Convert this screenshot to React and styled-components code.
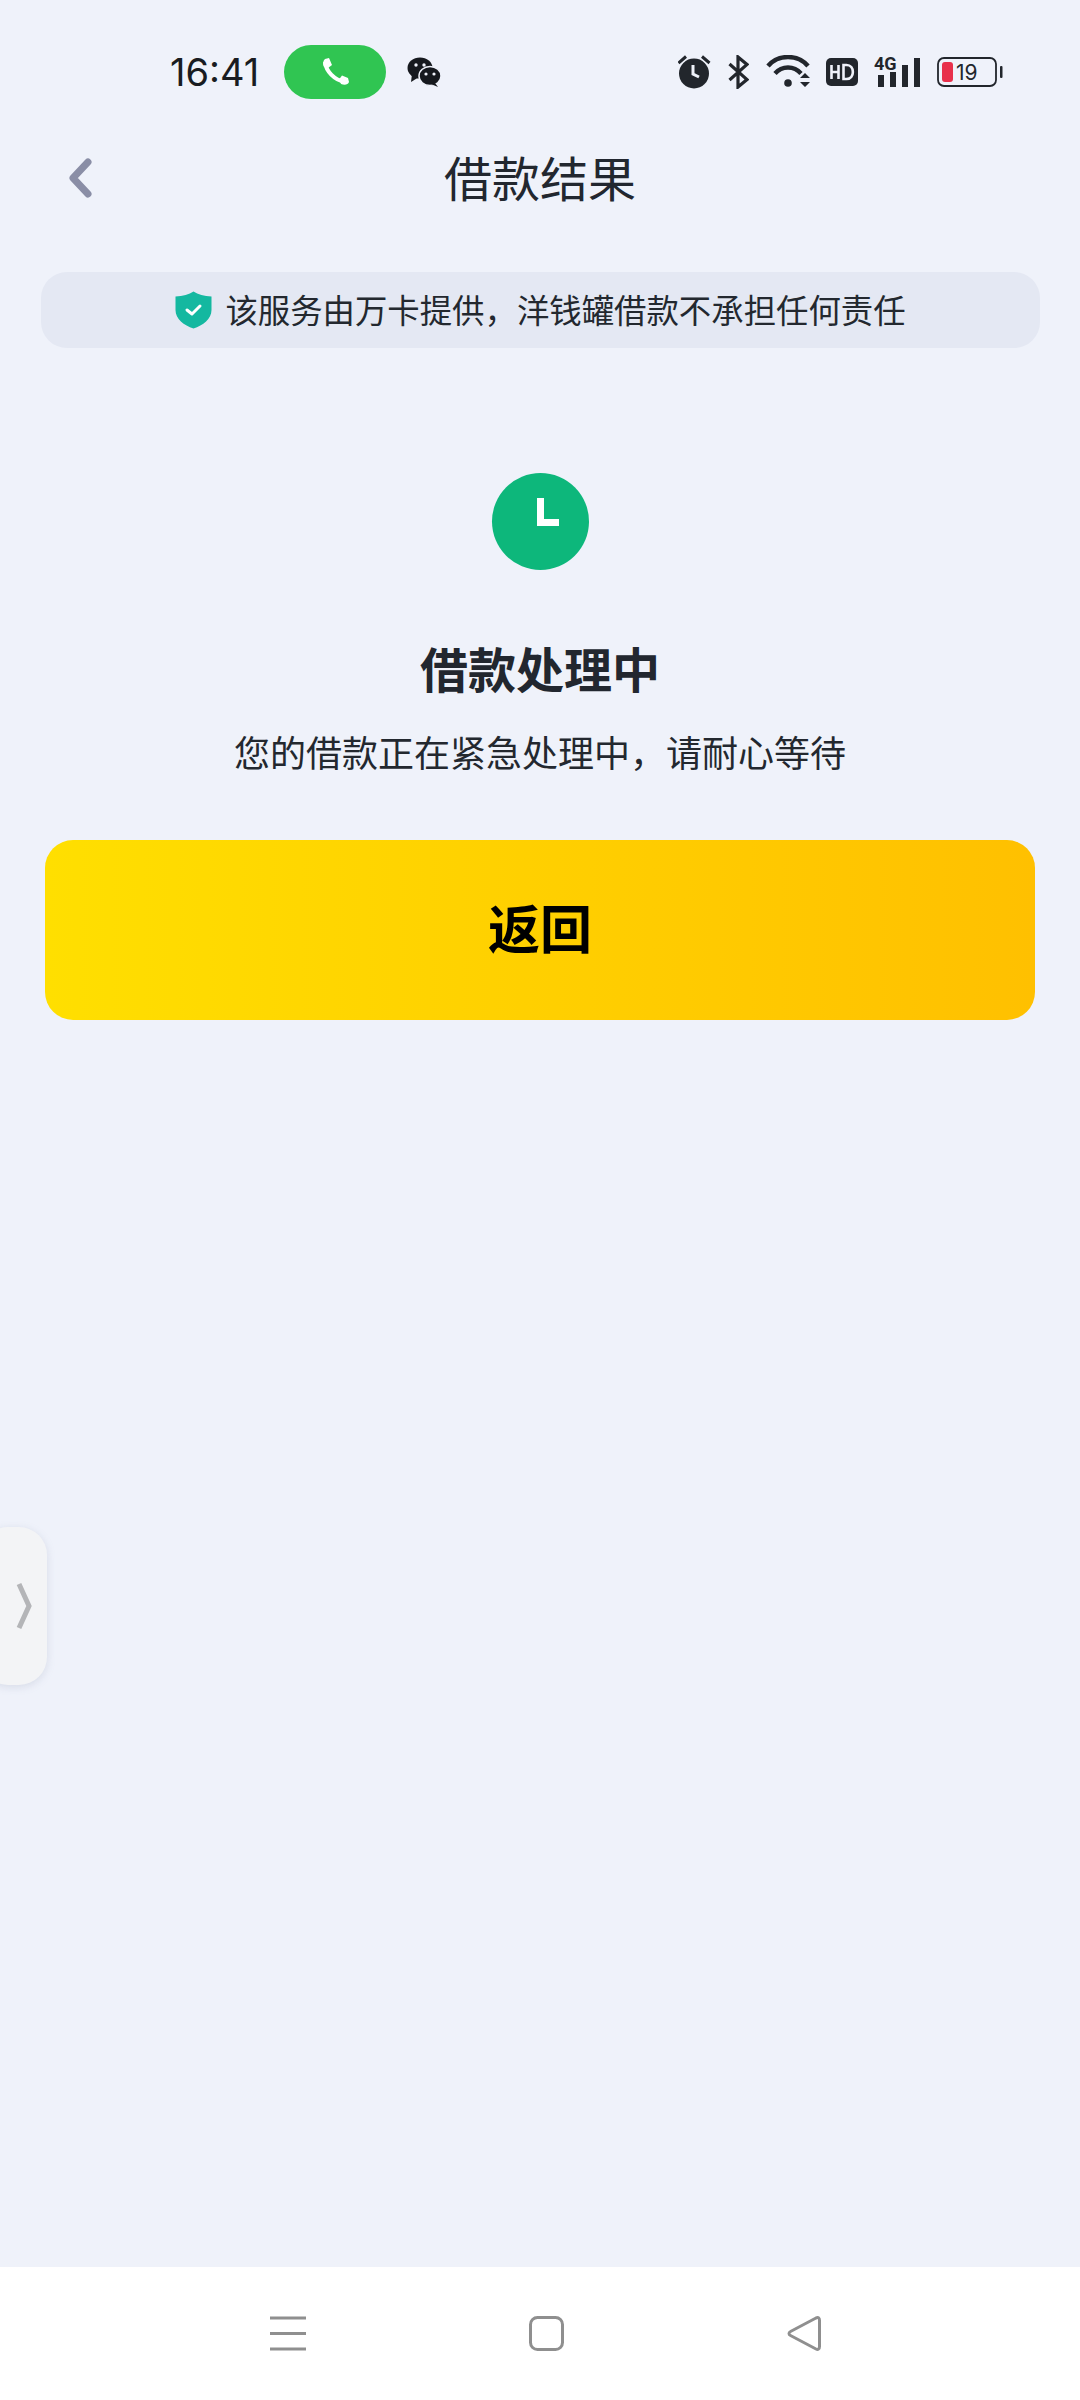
import React from "react";
import styled, { createGlobalStyle } from "styled-components";

const GlobalStyle = createGlobalStyle`
  html, body {
    margin: 0;
    padding: 0;
    background: #eff2fa;
    font-family: "Noto Sans CJK SC", "Noto Sans", sans-serif;
  }
`;

const Page = styled.div`
  position: relative;
  width: 1080px;
  height: 2400px;
  display: flex;
  flex-direction: column;
  overflow: hidden;
  background: #eff2fa;
  color: #22272f;
`;

const StatusBar = styled.div`
  height: 72px;
  padding: 36px 77px 0 170px;
  display: flex;
  align-items: center;
  justify-content: space-between;
`;

const StatusGroup = styled.div`
  display: flex;
  align-items: center;
  gap: ${p => p.$gap || 0}px;
`;

const Clock = styled.span`
  font-family: Inter, "Noto Sans", sans-serif;
  font-size: 38px;
  line-height: 44px;
  width: 93px;
  color: #191c21;
`;

const CallPill = styled.div`
  width: 102px;
  height: 54px;
  margin-left: 21px;
  margin-right: 21px;
  border-radius: 27px;
  background: #30c552;
  display: flex;
  align-items: center;
  justify-content: center;
`;

const NavBar = styled.div`
  position: relative;
  height: 72px;
  margin-top: 32px;
  display: flex;
  align-items: center;
  justify-content: center;
`;

const BackButton = styled.div`
  position: absolute;
  left: 66px;
  top: 18px;
  display: flex;
`;

const Title = styled.h1`
  margin: 0;
  font-size: 48px;
  font-weight: 400;
  line-height: 72px;
  color: #22272f;
`;

const Notice = styled.div`
  margin: 60px 40px 0 41px;
  height: 76px;
  padding-bottom: 4px;
  box-sizing: border-box;
  border-radius: 26px;
  background: #e4e8f3;
  display: flex;
  align-items: center;
  justify-content: center;
  gap: 13px;
  font-size: 32.4px;
  color: #23282f;
`;

const Shield = styled.svg`
  display: block;
  margin-top: 3px;
`;

const Result = styled.div`
  display: flex;
  flex-direction: column;
  align-items: center;
  padding-top: 125px;
`;

const StatusCircle = styled.div`
  width: 97px;
  height: 97px;
  border-radius: 50%;
  background: #0db77b;
  display: flex;
`;

const Heading = styled.h2`
  margin: 62px 0 0;
  font-size: 48px;
  font-weight: 700;
  line-height: 70px;
  color: #22272f;
`;

const Message = styled.p`
  margin: 23px 0 0;
  font-size: 36px;
  font-weight: 400;
  line-height: 52px;
  color: #23282f;
`;

const PrimaryButton = styled.button`
  display: block;
  width: 990px;
  height: 180px;
  margin: 63px 0 0 45px;
  padding: 0 0 8px;
  border: 0;
  border-radius: 28px;
  background: linear-gradient(90deg, #ffdf00, #ffc000);
  font-family: inherit;
  font-size: 52px;
  font-weight: 700;
  color: #000;
`;

const Spacer = styled.div`
  flex: 1;
`;

const SideHandle = styled.div`
  position: absolute;
  left: -20px;
  top: 1527px;
  width: 67px;
  height: 158px;
  border-radius: 28px;
  background: #f3f4f6;
  box-shadow: 0 2px 8px rgba(120, 130, 160, 0.2);
  display: flex;
  align-items: center;
  justify-content: flex-end;
  padding-right: 14px;
  box-sizing: border-box;
`;

const BottomNav = styled.div`
  height: 133px;
  background: #fff;
  box-sizing: border-box;
  display: flex;
  align-items: center;
  gap: 223px;
  padding-left: 270px;
`;

const NavIcon = styled.svg`
  display: block;
`;

const SignalSvg = styled.svg`
  display: block;
  margin-top: -6px;
`;

const PhoneIcon = () => (
  <svg width="30" height="30" viewBox="0 0 30 30">
    <path d="M5 5 C6 14 14 23 25 25" stroke="#fff" strokeWidth="4" fill="none" />
    <path d="M5 2 L9 1 L12 8 L8 11 L4 10 C2.5 7 3 3.5 5 2 Z" fill="#fff" />
    <path d="M28 21 L29 25 C28 27.5 25 28.5 21 27 L19 22.5 L22 18.5 Z" fill="#fff" />
  </svg>
);

const WeChatIcon = () => (
  <svg width="34" height="30" viewBox="0 0 34 30">
    <ellipse cx="13" cy="11" rx="12.5" ry="10.5" fill="#16191e" />
    <path d="M5 17 L4 25 L12 20 Z" fill="#16191e" />
    <ellipse cx="23" cy="19" rx="11" ry="9.5" fill="#16191e" stroke="#eff2fa" strokeWidth="1.5" />
    <path d="M28 26 L31 30 L24 27 Z" fill="#16191e" />
    <circle cx="9" cy="8" r="1.7" fill="#eff2fa" />
    <circle cx="17" cy="8" r="1.7" fill="#eff2fa" />
    <circle cx="19" cy="17" r="1.6" fill="#eff2fa" />
    <circle cx="27" cy="17" r="1.6" fill="#eff2fa" />
  </svg>
);

const AlarmIcon = () => (
  <svg width="34" height="34" viewBox="0 0 34 34">
    <circle cx="16" cy="18.5" r="15" fill="#22262c" />
    <path d="M0.5 8 L8 1.5 M31.5 8 L24 1.5" stroke="#22262c" strokeWidth="3" />
    <path d="M15 10 L15 19 L21 22" stroke="#eff2fa" strokeWidth="3" fill="none" />
  </svg>
);

const BluetoothIcon = () => (
  <svg width="21" height="34" viewBox="0 0 21 34">
    <path d="M1.5 9 L19 24.5 L10 32 L10 2 L19 9.5 L1.5 25" stroke="#22262c" strokeWidth="3.2" fill="none" />
  </svg>
);

const WifiIcon = () => (
  <svg width="45" height="34" viewBox="-3 0 45 34">
    <path d="M0 11 C10 -1 30 -1 40 11" stroke="#22262c" strokeWidth="4.4" fill="none" />
    <path d="M7 18.5 C14 10.5 26 10.5 33 18.5" stroke="#22262c" strokeWidth="4.4" fill="none" />
    <circle cx="20" cy="28" r="3.8" fill="#22262c" />
    <path d="M32 23 L37 18 L42 23 Z M32 27 L42 27 L37 32 Z" fill="#22262c" />
  </svg>
);

const HdIcon = () => (
  <svg width="32" height="28" viewBox="0 0 32 28">
    <rect width="32" height="28" rx="5" fill="#22262c" />
    <path d="M5.5 7 V21 M12.5 7 V21 M5.5 14 H12.5" stroke="#eff2fa" strokeWidth="2.6" fill="none" />
    <path d="M17.5 7 V21 H20.5 C29 21 29 7 20.5 7 Z" stroke="#eff2fa" strokeWidth="2.6" fill="none" />
  </svg>
);

const SignalIcon = () => (
  <SignalSvg width="47" height="38" viewBox="0 -6 47 38">
    <text x="0" y="14" fontFamily="Roboto, sans-serif" fontSize="18" fontWeight="700" fill="#22262c">4G</text>
    <rect x="4" y="19" width="6" height="12" fill="#22262c" />
    <rect x="16" y="16" width="6" height="15" fill="#22262c" />
    <rect x="28" y="9" width="6" height="22" fill="#22262c" />
    <rect x="40" y="2" width="6" height="29" fill="#22262c" />
  </SignalSvg>
);

const BatteryIcon = () => (
  <svg width="66" height="30" viewBox="0 0 66 30">
    <rect x="1" y="1" width="58" height="28" rx="6" fill="none" stroke="#22262c" strokeWidth="1.8" />
    <rect x="5" y="5" width="11" height="20" rx="3" fill="#e8304b" />
    <text x="19" y="23" fontFamily="Inter, sans-serif" fontSize="21" fill="#22262c">19</text>
    <rect x="63" y="9" width="2.5" height="12" rx="1" fill="#22262c" />
  </svg>
);

const ShieldIcon = () => (
  <Shield width="37" height="38" viewBox="0 0 37 38">
    <path
      d="M18.5 0.5 C23 3.5 29 5 36.5 5.5 V19 C36.5 28 28 34.5 18.5 37.5 C9 34.5 0.5 28 0.5 19 V5.5 C8 5 14 3.5 18.5 0.5 Z"
      fill="#14b8a0"
    />
    <path d="M12 19 L17 23 L25 15" stroke="#fff" strokeWidth="3" fill="none" strokeLinecap="round" strokeLinejoin="round" />
  </Shield>
);

const App = () => (
  <Page>
    <GlobalStyle />
    <StatusBar>
      <StatusGroup>
        <Clock>16:41</Clock>
        <CallPill>
          <PhoneIcon />
        </CallPill>
        <WeChatIcon />
      </StatusGroup>
      <StatusGroup $gap={16}>
        <AlarmIcon />
        <BluetoothIcon />
        <WifiIcon />
        <HdIcon />
        <SignalIcon />
        <BatteryIcon />
      </StatusGroup>
    </StatusBar>
    <NavBar>
      <BackButton>
        <svg width="30" height="40" viewBox="0 0 30 40">
          <path d="M22 4 L7 20 L22 36" stroke="#8a8ea6" strokeWidth="7" fill="none" strokeLinecap="round" strokeLinejoin="round" />
        </svg>
      </BackButton>
      <Title>借款结果</Title>
    </NavBar>
    <Notice>
      <ShieldIcon />
      <span>{"该服务由万卡提供\uFF0C洋钱罐借款不承担任何责任"}</span>
    </Notice>
    <Result>
      <StatusCircle>
        <svg width="97" height="97" viewBox="0 0 97 97">
          <path d="M48.5 25 V49.5 H67" stroke="#fff" strokeWidth="7" fill="none" />
        </svg>
      </StatusCircle>
      <Heading>借款处理中</Heading>
      <Message>{"您的借款正在紧急处理中\uFF0C请耐心等待"}</Message>
    </Result>
    <PrimaryButton>返回</PrimaryButton>
    <Spacer />
    <SideHandle>
      <svg width="18" height="50" viewBox="0 0 18 50">
        <path d="M4 3 L14 25 L4 47" stroke="#b4b5b8" strokeWidth="5" fill="none" />
      </svg>
    </SideHandle>
    <BottomNav>
      <NavIcon width="36" height="35" viewBox="0 0 36 35">
        <path d="M0 2 H36 M0 17.5 H36 M0 33 H36" stroke="#8f8f8f" strokeWidth="3" />
      </NavIcon>
      <NavIcon width="35" height="35" viewBox="0 0 35 35">
        <rect x="1.5" y="1.5" width="32" height="32" rx="7" fill="none" stroke="#8f8f8f" strokeWidth="3" />
      </NavIcon>
      <NavIcon width="34" height="35" viewBox="0 0 34 35">
        <path d="M29 2 C31.5 1 32.5 2 32.5 4.5 V30.5 C32.5 33 31 34 29 33 L3.5 19.5 C1.5 18.5 1.5 16.5 3.5 15.5 Z" fill="none" stroke="#8f8f8f" strokeWidth="3" strokeLinejoin="round" />
      </NavIcon>
    </BottomNav>
  </Page>
);

export default App;
